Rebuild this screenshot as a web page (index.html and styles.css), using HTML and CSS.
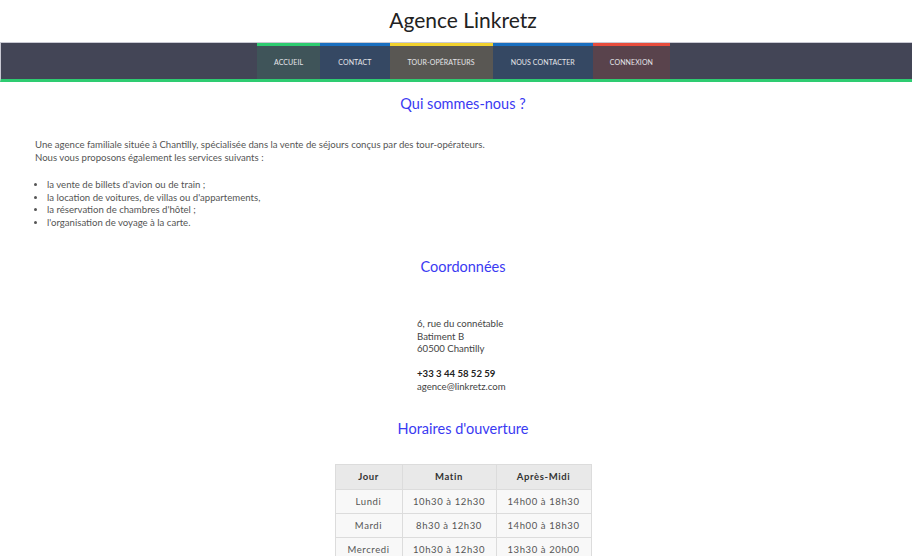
FILE: index.html
```html
<!DOCTYPE html>
<html lang="fr">
<head>
<meta charset="utf-8">
<title>Agence Linkretz</title>
<link rel="stylesheet" href="styles.css">
</head>
<body>
<header class="site-header">
  <h1 class="site-title">Agence Linkretz</h1>
</header>
<nav class="main-nav">
  <ul class="nav-list">
    <li class="nav-item item-accueil"><a href="#">ACCUEIL</a></li>
    <li class="nav-item item-contact"><a href="#">CONTACT</a></li>
    <li class="nav-item item-tour"><a href="#">TOUR-OPÉRATEURS</a></li>
    <li class="nav-item item-nous"><a href="#">NOUS CONTACTER</a></li>
    <li class="nav-item item-connexion"><a href="#">CONNEXION</a></li>
  </ul>
</nav>
<main class="content">
  <section class="about">
    <h2 class="section-title">Qui sommes-nous ?</h2>
    <p class="intro">Une agence familiale située à Chantilly, spécialisée dans la vente de séjours conçus par des tour-opérateurs.<br>Nous vous proposons également les services suivants :</p>
    <ul class="services">
      <li>la vente de billets d'avion ou de train ;</li>
      <li>la location de voitures, de villas ou d'appartements,</li>
      <li>la réservation de chambres d'hôtel ;</li>
      <li>l'organisation de voyage à la carte.</li>
    </ul>
  </section>
  <section class="coords">
    <h2 class="section-title">Coordonnées</h2>
    <div class="address-wrap">
      <address class="address">
        <p>6, rue du connétable<br>Batiment B<br>60500 Chantilly</p>
        <p><strong class="phone">+33 3 44 58 52 59</strong><br>agence@linkretz.com</p>
      </address>
    </div>
  </section>
  <section class="hours">
    <h2 class="section-title">Horaires d'ouverture</h2>
    <div class="table-wrap">
      <table class="hours-table">
        <thead>
          <tr><th class="col-day">Jour</th><th class="col-am">Matin</th><th class="col-pm">Après-Midi</th></tr>
        </thead>
        <tbody>
          <tr><td>Lundi</td><td>10h30 à 12h30</td><td>14h00 à 18h30</td></tr>
          <tr><td>Mardi</td><td>8h30 à 12h30</td><td>14h00 à 18h30</td></tr>
          <tr><td>Mercredi</td><td>10h30 à 12h30</td><td>13h30 à 20h00</td></tr>
          <tr><td>Jeudi</td><td>8h30 à 12h30</td><td>14h00 à 18h30</td></tr>
        </tbody>
      </table>
    </div>
  </section>
</main>
</body>
</html>
```
FILE: styles.css
```css
html, body {
  margin: 0;
  padding: 0;
  background: #ffffff;
}
body {
  font-family: Lato, "Open Sans", sans-serif;
  color: #555555;
}
.site-header {
  height: 42px;
  display: flex;
  align-items: center;
  justify-content: center;
  padding-left: 14px;
}
.site-title {
  margin: 0;
  font-weight: 400;
  font-size: 21px;
  color: #222222;
  padding-bottom: 3px;
}
.main-nav {
  background: #434556;
  border-top: 1px solid #c9c9d3;
  border-left: 1px solid #c9c9d3;
  border-bottom: 3px solid #2ecc71;
}
.nav-list {
  list-style: none;
  margin: 0;
  padding: 0 0 0 14px;
  display: flex;
  justify-content: center;
}
.nav-item {
  border-top: 3px solid transparent;
}
.nav-item a {
  display: block;
  height: 33px;
  line-height: 33px;
  padding: 0 18px;
  font-size: 7px;
  color: #e6e6ea;
  text-decoration: none;
  letter-spacing: 0.1px;
}
.item-accueil { background: #3f5459; border-top-color: #2ecc71; }
.item-accueil a { padding: 0 17px; }
.item-contact { background: #354863; border-top-color: #1a6fc0; }
.item-tour { background: #595753; border-top-color: #f1d12e; }
.item-nous { background: #354863; border-top-color: #1a6fc0; }
.item-connexion { background: #59434c; border-top-color: #e74c3c; }
.item-connexion a { padding: 0 17px; }

.content {
  padding: 0;
}
.section-title {
  margin: 0;
  padding-left: 14px;
  text-align: center;
  font-weight: 400;
  font-size: 14.5px;
  color: #3a3af2;
}
.about .section-title {
  padding-top: 13px;
}
.intro {
  margin: 27px 0 0 35px;
  font-size: 9.6px;
  line-height: 12.5px;
  color: #555555;
}
.services {
  margin: 15px 0 0 0;
  padding-left: 47px;
  font-size: 9.6px;
  line-height: 12.6px;
  color: #555555;
}
.coords .section-title {
  margin-top: 29px;
}
.address-wrap {
  display: flex;
  justify-content: center;
  padding: 43px 0 0 14px;
}
.address {
  font-style: normal;
  font-size: 9.6px;
  line-height: 12.5px;
  color: #444444;
  width: 92px;
}
.address p {
  margin: 0 0 12.5px 0;
}
.phone {
  color: #222222;
  font-weight: 700;
}
.hours .section-title {
  margin-top: 14px;
}
.table-wrap {
  display: flex;
  justify-content: center;
  padding: 27px 0 0 14px;
}
.hours-table {
  border-collapse: collapse;
  font-size: 9.5px;
  letter-spacing: 0.6px;
  color: #555555;
}
.hours-table th,
.hours-table td {
  border: 1px solid #dcdcdc;
  text-align: center;
  height: 23px;
  padding: 0;
}
.hours-table th {
  background: #e9e9e9;
  color: #333333;
  font-weight: 700;
  height: 24px;
}
.hours-table td {
  background: #f8f8f8;
}
.col-day { width: 66px; }
.col-am { width: 93px; }
.col-pm { width: 94px; }
```
